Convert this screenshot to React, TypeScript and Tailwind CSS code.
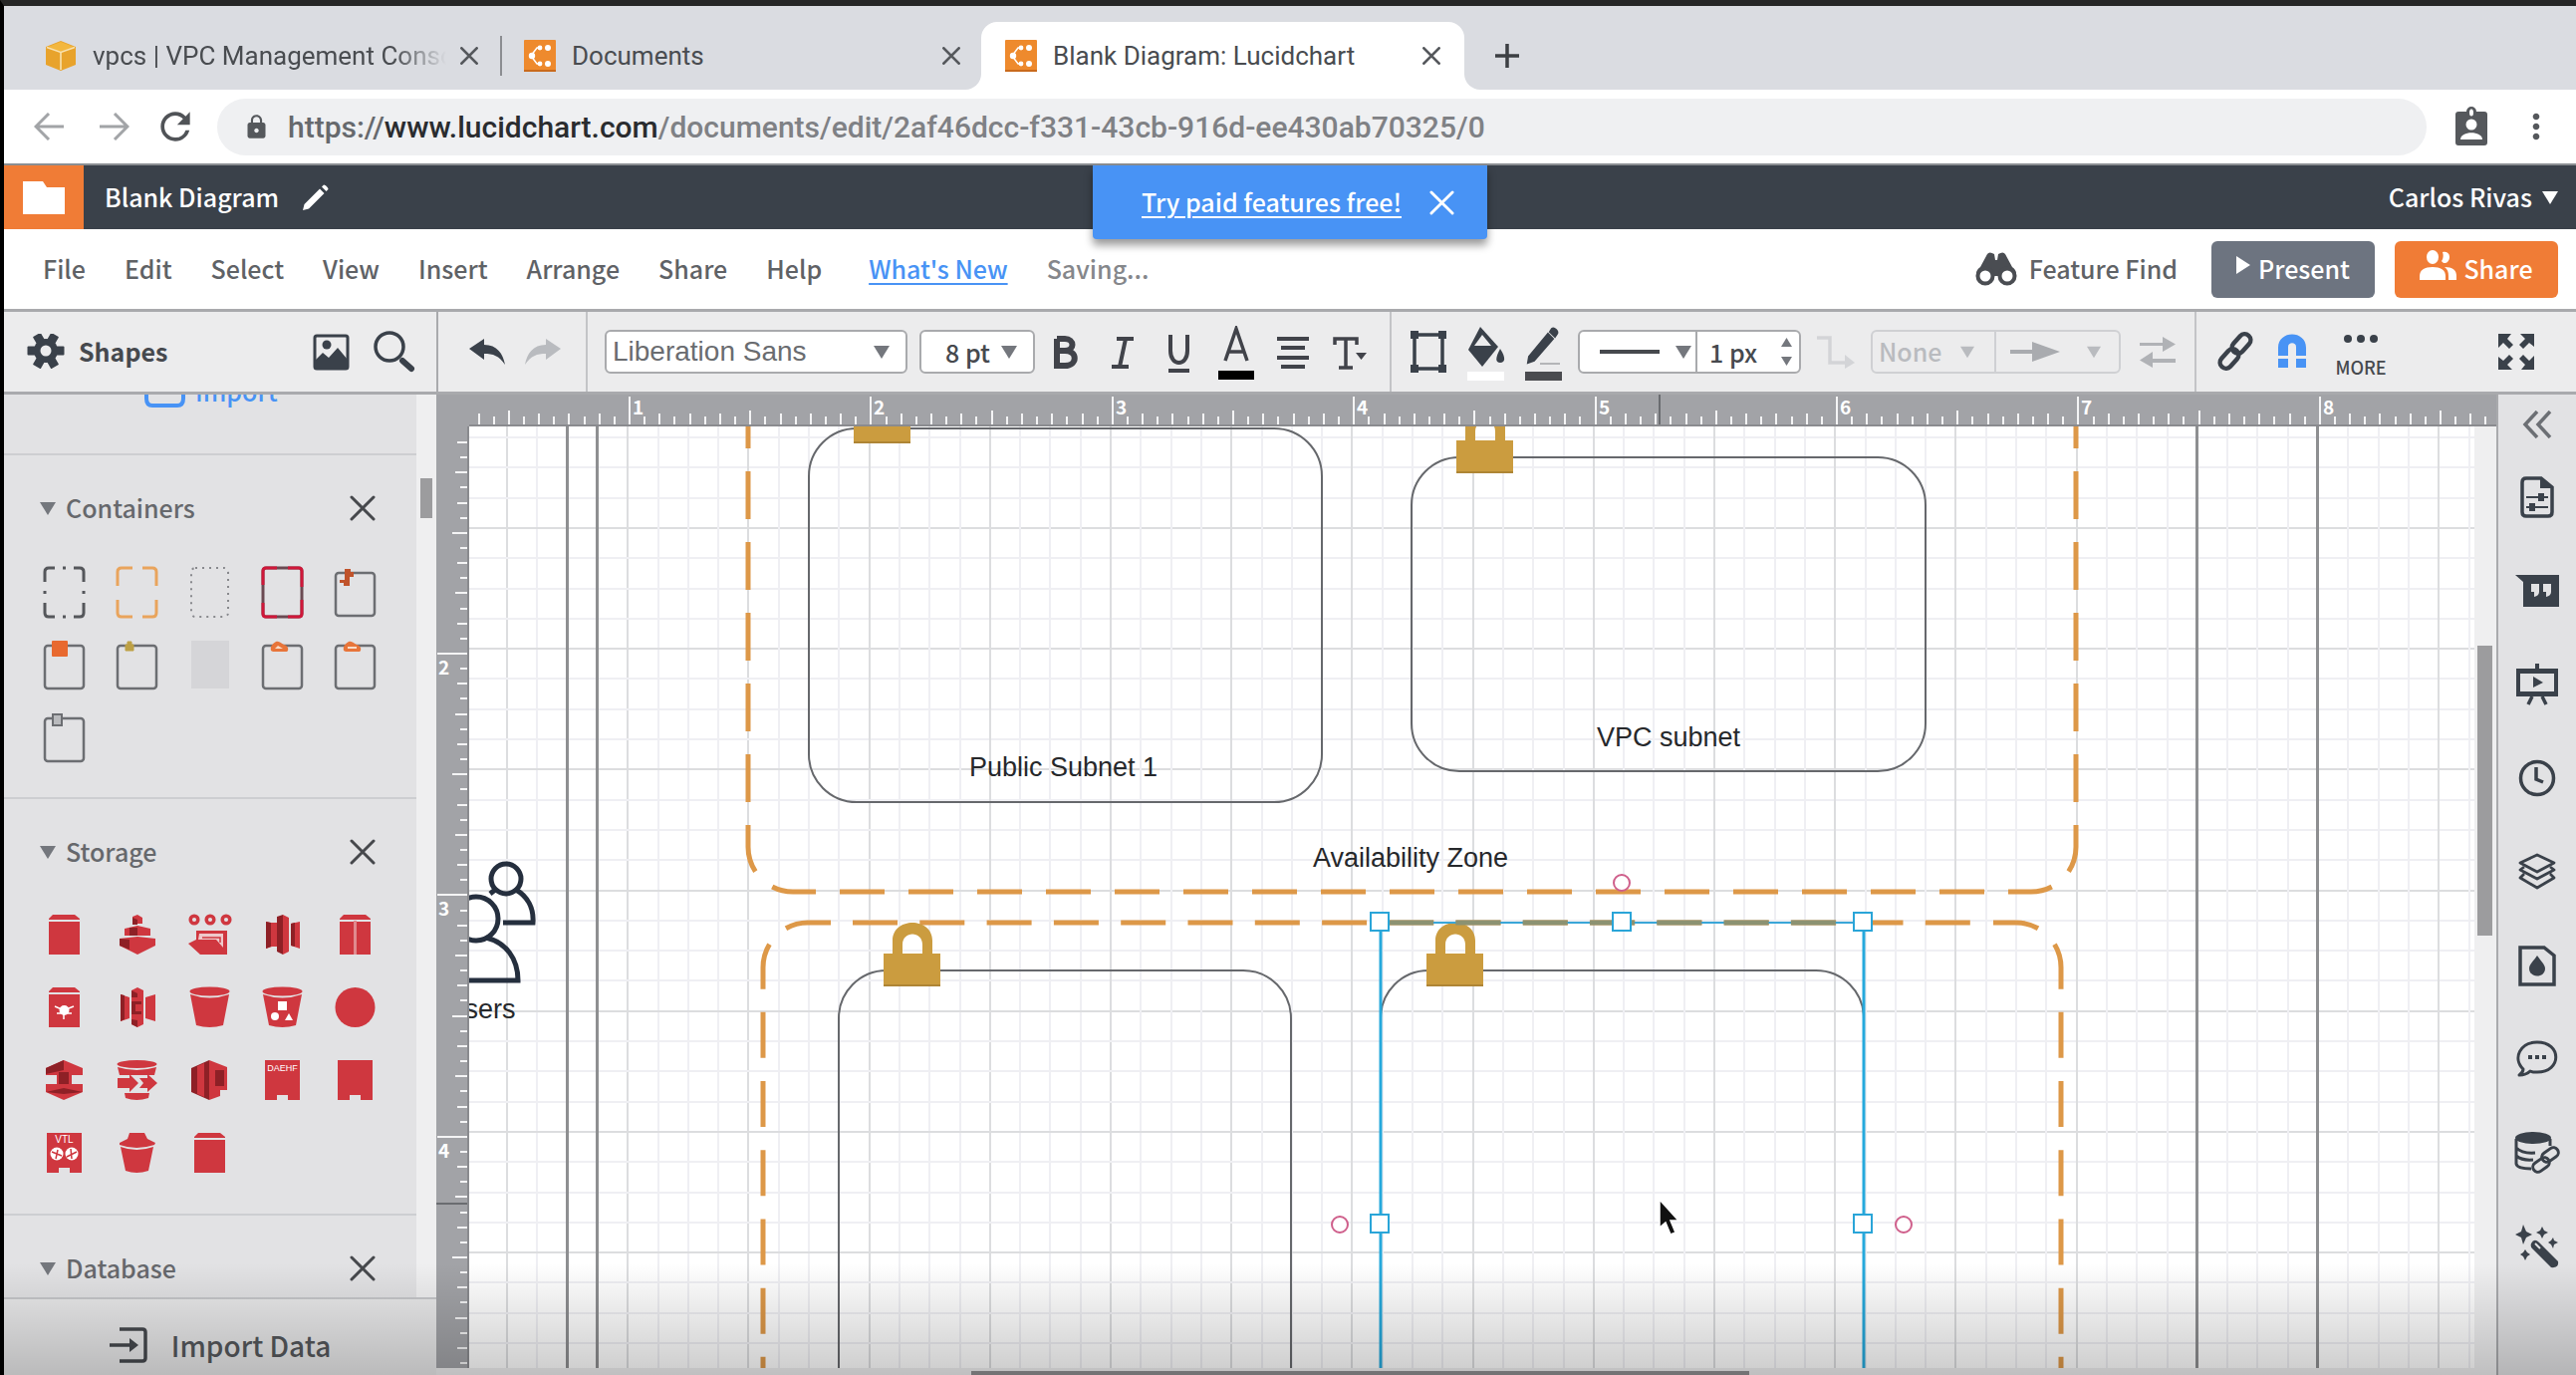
import React from "react";
import { MdRefresh, MdLock, MdMoreVert } from "react-icons/md";

const UI = "font-['Noto_Sans_CJK_SC',sans-serif]";
const ROBOTO = "font-[Roboto,sans-serif]";
const ARIAL = "font-['Liberation_Sans',sans-serif]";
const INK = "#3a414a";

/* ---------- small shared glyphs ---------- */

function Cross({ size = 26, color = "#46484c", w = 3 }: { size?: number; color?: string; w?: number }) {
  return (
    <svg width={size} height={size} viewBox="0 0 26 26" fill="none" stroke={color} strokeWidth={w} strokeLinecap="round">
      <path d="M2 2 24 24M24 2 2 24" />
    </svg>
  );
}

function Down({ w = 16, h = 13, color = "#74777d" }: { w?: number; h?: number; color?: string }) {
  return (
    <svg width={w} height={h} viewBox="0 0 16 13" fill={color} className="shrink-0">
      <path d="M0 0H16L8 13Z" />
    </svg>
  );
}

/* ---------- browser chrome ---------- */

function LucidLogo() {
  return (
    <svg width="32" height="32" viewBox="0 0 32 32" className="shrink-0">
      <rect width="32" height="32" rx="1" fill="#ee8a2d" />
      <rect y="30" width="32" height="2" fill="#c96a1c" />
      <g fill="#fff">
        <path d="M7 16 13 8H18M7 16 13 24H18" fill="none" stroke="#fff" strokeWidth="1.500" />
        <circle cx="8" cy="16" r="3.200" />
        <circle cx="16" cy="8" r="2.400" />
        <circle cx="16" cy="24" r="2.400" />
        <circle cx="24" cy="8" r="3" />
        <circle cx="24" cy="24" r="3" />
      </g>
    </svg>
  );
}

function CubeLogo() {
  return (
    <svg width="32" height="32" viewBox="0 0 32 32" className="shrink-0">
      <path d="M1 7 16 1 31 7V25L16 31 1 25Z" fill="#e8a32c" />
      <path d="M3 7 16 2 29 7 16 12Z" fill="#f3b73e" />
      <path d="M16 12V30M2 7.500 16 12.500 30 7.500" stroke="#f8e2b0" strokeWidth="1.600" fill="none" />
    </svg>
  );
}

function Tabs() {
  return (
    <div className={`flex h-[84px] items-end bg-[#dadce1] ${ROBOTO} text-[26px] text-[#494c50]`}>
      <div className="flex h-[68px] w-[500px] items-center pl-[41px]">
        <CubeLogo />
        <span className="ml-4 w-[355px] overflow-hidden whitespace-nowrap [mask-image:linear-gradient(to_right,black_85%,transparent)]">
          vpcs | VPC Management Console
        </span>
        <button aria-label="Close tab" className="ml-3.5">
          <Cross size={18} w={4} color="#55585c" />
        </button>
        <span className="ml-auto h-10 w-0.5 bg-[#8b8d91]" />
      </div>
      <div className="flex h-[68px] w-[481px] items-center pr-[21px] pl-[22px]">
        <LucidLogo />
        <span className="ml-4">Documents</span>
        <button aria-label="Close tab" className="ml-auto">
          <Cross size={18} w={4} color="#55585c" />
        </button>
      </div>
      <div className="relative flex h-[68px] w-[485px] items-center rounded-t-2xl bg-white pr-6 pl-6 before:absolute before:bottom-0 before:-left-4 before:size-4 before:rounded-br-2xl before:shadow-[5px_5px_0_4px_white] before:[clip-path:inset(0)] after:absolute after:-right-4 after:bottom-0 after:size-4 after:rounded-bl-2xl after:shadow-[-5px_5px_0_4px_white] after:[clip-path:inset(0)]">
        <LucidLogo />
        <span className="ml-4">Blank Diagram: Lucidchart</span>
        <button aria-label="Close tab" className="ml-auto">
          <Cross size={18} w={4} color="#55585c" />
        </button>
      </div>
      <button aria-label="New tab" className="ml-[30px] flex h-[68px] items-center">
        <svg width="26" height="26" viewBox="0 0 26 26" stroke="#3c3f43" strokeWidth="3.500">
          <path d="M13 1V25M1 13H25" />
        </svg>
      </button>
    </div>
  );
}

function AddressBar() {
  return (
    <div className="flex h-[74px] items-center bg-white pr-5 pl-[30px]">
      <button aria-label="Back" className="mr-9">
        <svg width="30" height="28" viewBox="0 0 30 28" fill="none" stroke="#a2a4a7" strokeWidth="3">
          <path d="M30 14H3M15 1 2 14 15 27" />
        </svg>
      </button>
      <button aria-label="Forward" className="mr-6">
        <svg width="30" height="28" viewBox="0 0 30 28" fill="none" stroke="#a2a4a7" strokeWidth="3">
          <path d="M0 14H27M15 1 28 14 15 27" />
        </svg>
      </button>
      <button aria-label="Reload" className="mr-5">
        <MdRefresh size={44} color="#505357" />
      </button>
      <div className="flex h-[57px] flex-1 items-center rounded-full bg-[#eff0f2] pl-[26px]">
        <MdLock size={27} color="#55585c" />
        <span className={`ml-[18px] ${ROBOTO} text-[30px] font-medium whitespace-nowrap text-[#7f8185]`}>
          <span className="text-[#66696d]">https://</span>
          <span className="text-[#2a2c2f]">www.lucidchart.com</span>/documents/edit/2af46dcc-f331-43cb-916d-ee430ab70325/0
        </span>
      </div>
      <button aria-label="Account badge" className="ml-7">
        <svg width="34" height="40" viewBox="0 0 34 40">
          <path d="M4 5H12A5 5 0 0 1 22 5H30A3 3 0 0 1 33 8V36A3 3 0 0 1 30 39H4A3 3 0 0 1 1 36V8A3 3 0 0 1 4 5Z" fill="#55585c" />
          <ellipse cx="17" cy="6" rx="2" ry="3.500" fill="#fff" />
          <circle cx="17" cy="18" r="5.500" fill="#fff" />
          <path d="M6 33C6 24 28 24 28 33Z" fill="#fff" />
        </svg>
      </button>
      <button aria-label="Browser menu" className="ml-7">
        <MdMoreVert size={40} color="#55585c" />
      </button>
    </div>
  );
}

/* ---------- application header ---------- */

function TitleBar() {
  return (
    <div className={`relative flex h-[66px] items-center border-t-2 border-[#8b8e92] bg-[#3a414a] ${UI} text-[25px] font-medium text-white`}>
      <button aria-label="Documents" className="flex h-full w-20 items-center justify-center bg-[#f07c36]">
        <svg width="42" height="34" viewBox="0 0 42 34" fill="#fff">
          <path d="M0 1H20L24 7H42V34H0Z" />
        </svg>
      </button>
      <h1 className="ml-[21px]">Blank Diagram</h1>
      <button aria-label="Rename" className="ml-6">
        <svg width="26" height="26" viewBox="0 0 26 26" fill="#fff">
          <path d="M0 26 1.500 20 17 4.500 21.500 9 6 24.500ZM19 2.500 21 .5C22 0 26 3.500 25.500 5L23.500 7Z" />
        </svg>
      </button>
      <button className="mr-[18px] ml-auto flex items-center gap-2.5">
        Carlos Rivas
        <Down color="#fff" />
      </button>
      <div className="absolute top-0 left-1/2 z-10 flex h-[74px] w-[396px] -translate-x-1/2 items-center justify-center gap-7 rounded-b bg-[#4893f5] pl-4 shadow-[0_6px_8px_rgba(0,0,0,0.4)]">
        <a href="#upgrade" className="font-medium whitespace-nowrap underline decoration-2 underline-offset-4">
          Try paid features free!
        </a>
        <button aria-label="Dismiss">
          <Cross size={25} color="#fff" />
        </button>
      </div>
    </div>
  );
}

function MenuBar() {
  return (
    <div className={`flex h-[83px] items-center border-b-[3px] border-[#a9aaad] bg-white pr-[18px] pl-[39px] ${UI} text-[25px] font-medium text-[#5f6266]`}>
      <nav className="flex items-center gap-[39px]">
        {["File", "Edit", "Select", "View", "Insert", "Arrange", "Share", "Help"].map((m) => (
          <button key={m}>{m}</button>
        ))}
        <a href="#new" className="ml-2 text-[#4893f5] underline decoration-2 underline-offset-4">
          What's New
        </a>
        <span className="text-[#85878b]">Saving...</span>
      </nav>
      <button className="mr-[34px] ml-auto flex items-center gap-3 whitespace-nowrap">
        <svg width="42" height="34" viewBox="0 0 42 34" fill="#4a4d52">
          <path d="M12 2Q14-1 19 2L20 8H22L23 2Q28-1 30 2L37 15Q42 18 41 25L33 20H24V24H18V20H9L1 25Q0 18 5 15Z" />
          <circle cx="10" cy="24" r="7.500" fill="#fff" stroke="#4a4d52" strokeWidth="4" />
          <circle cx="32" cy="24" r="7.500" fill="#fff" stroke="#4a4d52" strokeWidth="4" />
        </svg>
        Feature Find
      </button>
      <button className="flex h-[57px] w-[164px] items-center justify-center gap-2 rounded-md bg-[#6d7480] text-white">
        <svg width="14" height="18" viewBox="0 0 14 18" fill="#fff" className="-mt-2">
          <path d="M0 0 14 9 0 18Z" />
        </svg>
        Present
      </button>
      <button className="ml-5 flex h-[57px] w-[164px] items-center justify-center gap-1.5 rounded-md bg-[#f07c36] text-white">
        <svg width="38" height="30" viewBox="0 0 38 30" fill="#fff" className="-mt-2">
          <ellipse cx="13" cy="7" rx="6" ry="7" />
          <path d="M23 2C30 0 32 8 28 12 26 14 23 13 22 11 24 8 24 5 23 2Z" />
          <path d="M0 30V26C0 20 5 17 13 17S26 20 26 26V30Z" />
          <path d="M25 17C33 17 37 20 37 26V30H29V26C29 22 28 19 25 17Z" />
        </svg>
        Share
      </button>
    </div>
  );
}

/* ---------- toolbar ---------- */

function IconButton({ label, children, className = "w-[57px]" }: { label: string; children: React.ReactNode; className?: string }) {
  return (
    <button aria-label={label} className={`flex h-full shrink-0 items-center justify-center ${className}`}>
      {children}
    </button>
  );
}

const Sep = () => <div className="h-full w-0.5 shrink-0 bg-[#c3c4c7]" />;

function Toolbar() {
  return (
    <div className={`flex h-[83px] items-center border-b-[3px] border-[#a9aaad] bg-[#ececed] ${UI} text-[25px] text-[#46494e]`}>
      <div className="flex h-full w-[436px] shrink-0 items-center border-r-2 border-[#a9aaad] pr-[21px] pl-[23px]">
        <button aria-label="Shape settings">
          <svg width="38" height="36" viewBox="0 0 38 36" fill={INK}>
            <g transform="translate(19 17)">
              <circle r="12" />
              {[0, 60, 120].map((a) => (
                <rect key={a} x="-18.500" y="-4.500" width="37" height="9" rx="1" transform={`rotate(${a})`} />
              ))}
              <circle r="5.500" fill="#ececed" />
            </g>
          </svg>
        </button>
        <h2 className="ml-3.5 font-bold">Shapes</h2>
        <button aria-label="Images" className="mr-6 ml-auto">
          <svg width="37" height="37" viewBox="0 0 37 37">
            <rect x="2" y="2" width="33" height="33" rx="2" fill="none" stroke={INK} strokeWidth="3" />
            <circle cx="14" cy="11" r="4.500" fill={INK} />
            <path d="M2 27 10 19 16 24 25 14 35 26V35H2Z" fill={INK} />
          </svg>
        </button>
        <button aria-label="Search shapes">
          <svg width="42" height="42" viewBox="0 0 42 42" fill="none" stroke={INK}>
            <circle cx="16" cy="16" r="14" strokeWidth="3.500" />
            <path d="M29 30 38 38" strokeWidth="6" strokeLinecap="round" />
          </svg>
        </button>
      </div>
      <div className="flex h-full w-[148px] shrink-0 items-center justify-center gap-5 pl-1.5">
        <button aria-label="Undo">
          <svg width="36" height="26" viewBox="0 0 36 26" fill={INK}>
            <path d="M0 10 15 0V6C28 6 34 15 36 26 30 17 24 15 15 15V21Z" />
          </svg>
        </button>
        <button aria-label="Redo">
          <svg width="36" height="26" viewBox="0 0 36 26" fill="#b9bbbf">
            <path d="M36 10 21 0V6C8 6 2 15 0 26 6 17 12 15 21 15V21Z" />
          </svg>
        </button>
      </div>
      <Sep />
      <label className="relative ml-[17px] shrink-0">
        <select aria-label="Font" className={`block h-[44px] w-[304px] appearance-none rounded-md border-2 border-[#a9aaad] bg-white pl-1.5 ${ARIAL} text-[28px] leading-10 text-[#6a6c70]`}>
          <option>Liberation Sans</option>
        </select>
        <span className="pointer-events-none absolute top-4 right-[18px]">
          <Down />
        </span>
      </label>
      <label className="relative ml-3 shrink-0">
        <select aria-label="Font size" className="block h-[44px] w-[116px] appearance-none rounded-md border-2 border-[#a9aaad] bg-white pl-6 leading-10 font-medium">
          <option>8 pt</option>
        </select>
        <span className="pointer-events-none absolute top-4 right-[18px]">
          <Down />
        </span>
      </label>
      <div className="ml-0.5 flex h-full pt-0.5">
        <IconButton label="Bold">
          <svg width="26" height="36" viewBox="0 0 26 36" fill="none" stroke="#41434a" strokeWidth="6">
            <path d="M4 4H12C22 4 22 16 12 16H4M12 16C25 16 25 31 12 31H4V4" />
          </svg>
        </IconButton>
        <IconButton label="Italic">
          <svg width="22" height="36" viewBox="0 0 22 36" fill="none" stroke="#41434a" strokeWidth="4">
            <path d="M5 4H22M0 32H17M14 4 8 32" />
          </svg>
        </IconButton>
        <IconButton label="Underline">
          <svg width="24" height="40" viewBox="0 0 24 40" fill="none" stroke="#41434a" strokeWidth="4">
            <path d="M3 2V18C3 34 20 34 20 18V2M1 38H22" />
          </svg>
        </IconButton>
        <IconButton label="Text colour">
          <svg width="38" height="54" viewBox="0 0 38 54" fill="none">
            <path d="M8 35 19 3 30 35M12 26H27" stroke="#41434a" strokeWidth="3.500" />
            <rect x="1" y="45" width="36" height="9" fill="#000" />
          </svg>
        </IconButton>
        <IconButton label="Alignment">
          <svg width="34" height="36" viewBox="0 0 34 36" stroke="#41434a" strokeWidth="4">
            <path d="M1 4H33M5 13H29M1 23H33M5 32H29" />
          </svg>
        </IconButton>
        <IconButton label="Text options">
          <svg width="34" height="36" viewBox="0 0 34 36" fill="none" stroke="#41434a" strokeWidth="3.500">
            <path d="M2 10V4H24V10M13 4V33M6 33H20" />
            <path d="M23 18H34L28.500 25Z" fill="#41434a" stroke="none" />
          </svg>
        </IconButton>
      </div>
      <div className="ml-3 h-full w-0.5 shrink-0 bg-[#c3c4c7]" />
      <div className="ml-2 flex h-full">
        <IconButton label="Shape">
          <svg width="38" height="44" viewBox="0 0 38 44" fill={INK}>
            <rect x="5" y="5" width="28" height="34" fill="none" stroke={INK} strokeWidth="3.500" />
            <path d="M1 1H9V9H1ZM29 1H37V9H29ZM1 35H9V43H1ZM29 35H37V43H29Z" />
          </svg>
        </IconButton>
        <IconButton label="Fill colour" className="w-[59px] pt-1">
          <svg width="40" height="56" viewBox="0 0 40 56">
            <path d="M14 1 32 21 16 41 2 24Z" fill={INK} />
            <path d="M16 9 25 20H8Z" fill="#ececed" />
            <path d="M34 23C40 32 39 37 34 37 29 37 29 32 34 23Z" fill={INK} />
            <rect x="1" y="46" width="37" height="9" fill="#fff" />
          </svg>
        </IconButton>
        <IconButton label="Line colour" className="w-[57px] pt-1">
          <svg width="40" height="56" viewBox="0 0 40 56" fill={INK}>
            <path d="M4 37 5 31 24 8 29 13 10 35ZM26 6 28 3C30 1 35 6 33 8L31 11Z" stroke={INK} strokeWidth="2" />
            <path d="M16 38H36" stroke="#b4b5b8" strokeWidth="2" />
            <rect x="1" y="46" width="37" height="9" fill="#4a4b4f" />
          </svg>
        </IconButton>
      </div>
      <div className="ml-1.5 flex h-[44px] shrink-0 items-center rounded-md border-2 border-[#a9aaad] bg-white">
        <button aria-label="Line style" className="flex h-full w-[118px] items-center justify-between border-r-2 border-[#a9aaad] pr-1 pl-5">
          <svg width="60" height="4" viewBox="0 0 60 4">
            <rect width="60" height="4" fill="#46494e" />
          </svg>
          <Down />
        </button>
        <input aria-label="Line width" defaultValue="1 px" className="h-full w-[76px] bg-transparent pl-3 leading-10 font-medium outline-none" />
        <span className="flex w-[26px] flex-col items-center gap-2">
          <button aria-label="Increase line width" className="rotate-180">
            <Down w={11} h={11} />
          </button>
          <button aria-label="Decrease line width">
            <Down w={11} h={11} />
          </button>
        </span>
      </div>
      <IconButton label="Line shape" className="w-[70px]">
        <svg width="38" height="34" viewBox="0 0 38 34" fill="none" stroke="#d3d4d7" strokeWidth="3.500">
          <path d="M0 3H13V28H30" />
          <path d="M28 20 38 28 28 34Z" fill="#d3d4d7" stroke="none" />
        </svg>
      </IconButton>
      <div className="flex h-[44px] shrink-0 items-center rounded-md border-2 border-[#cfd0d3] text-[#b9bbbf]">
        <button className="flex h-full w-[124px] items-center justify-between border-r-2 border-[#cfd0d3] pr-5 pl-1.5 font-medium">
          None
          <Down w={14} color="#b9bbbf" />
        </button>
        <button aria-label="Arrow end" className="flex h-full w-[123px] items-center justify-between pr-4.5 pl-3.5">
          <svg width="50" height="20" viewBox="0 0 50 20" fill="#a9abaf">
            <path d="M0 8H22V0L50 10 22 20V12H0Z" />
          </svg>
          <Down w={14} color="#b9bbbf" />
        </button>
      </div>
      <IconButton label="Swap ends" className="w-[74px]">
        <svg width="36" height="34" viewBox="0 0 36 34" fill="#b0b2b6">
          <path d="M0 8H23V2L36 9.500 23 17V11H0ZM36 24H13V17L0 25.500 13 33V28H36Z" />
        </svg>
      </IconButton>
      <Sep />
      <IconButton label="Link" className="ml-2.5 w-[57px]">
        <svg width="40" height="42" viewBox="0 0 40 42" fill="none" stroke={INK} strokeWidth="4.500">
          <rect x="-6" y="-11" width="12" height="22" rx="6" transform="translate(26 13) rotate(42)" />
          <rect x="-6" y="-11" width="12" height="22" rx="6" transform="translate(14 28) rotate(42)" />
        </svg>
      </IconButton>
      <IconButton label="Snap">
        <svg width="30" height="36" viewBox="0 0 30 36" fill="#4893f5">
          <path d="M1 22V14C1-4 29-4 29 14V22H19V13C19 8 11 8 11 13V22ZM1 25H11V34H1ZM19 25H29V34H19Z" />
        </svg>
      </IconButton>
      <button className="ml-2 flex w-[66px] flex-col items-center gap-2.5 text-[18px] leading-7 font-medium">
        <svg width="34" height="8" viewBox="0 0 34 8" fill={INK} className="mt-3">
          <circle cx="4" cy="4" r="4" />
          <circle cx="17" cy="4" r="4" />
          <circle cx="30" cy="4" r="4" />
        </svg>
        MORE
      </button>
      <IconButton label="Full screen" className="mr-[31px] ml-auto w-[58px]">
        <svg width="38" height="38" viewBox="0 0 38 38" fill={INK}>
          {[0, 90, 180, 270].map((a) => (
            <path key={a} d="M1 1H14L10 6 16 12 12 16 6 10 1 15Z" transform={`rotate(${a} 19 19)`} />
          ))}
        </svg>
      </IconButton>
    </div>
  );
}

/* ---------- shape library ---------- */

const RED = "#cf373f";
const DARK = "#8e2026";

const frame = <rect x="10" y="10" width="39" height="43" rx="3" fill="none" stroke="#6c6e72" strokeWidth="2.500" />;

const containers: React.ReactNode[] = [
  <path d="M10 19V9Q10 5 14 5H20M28 5H31M39 5H45Q49 5 49 9V19M49 28V31M49 40V50Q49 54 45 54H39M31 54H28M20 54H14Q10 54 10 50V40M10 31V28" fill="none" stroke="#55575b" strokeWidth="3" />,
  <path d="M10 23V9Q10 5 14 5H25M35 5H45Q49 5 49 9V23M49 37V50Q49 54 45 54H35M25 54H14Q10 54 10 50V37" fill="none" stroke="#e9a45c" strokeWidth="3" />,
  <rect x="11" y="5" width="37" height="49" rx="4" fill="none" stroke="#88898d" strokeWidth="2" strokeDasharray="2 5" />,
  <>
    <rect x="10" y="5" width="39" height="49" rx="3" fill="none" stroke="#6b4a52" strokeWidth="3" />
    <path d="M10 22V8Q10 5 13 5H24M35 5H46Q49 5 49 8V24M49 37V51Q49 54 46 54H35M24 54H13Q10 54 10 51V40" fill="none" stroke="#cf1739" strokeWidth="3" />
  </>,
  <>
    {frame}
    <path d="M19 6H25V9H28V14H24V23H18V20H14V17H19Z" fill="#c0532b" />
  </>,
  <>
    {frame}
    <rect x="17" y="5" width="16" height="16" rx="1" fill="#e8692f" />
  </>,
  <>
    {frame}
    <path d="M18 9H26V15H18ZM20 9V6H24V9" fill="#bda045" stroke="#bda045" />
  </>,
  <rect x="11" y="5" width="38" height="48" fill="#d5d5d8" />,
  <>
    {frame}
    <path d="M18 15C17 10 20 8 23 6 27 5 28 8 31 9 36 10 36 15 34 16H20Z" fill="#e8753a" />
    <path d="M22 13 25 10 30 13Z" fill="#f9dcc8" />
  </>,
  <>
    {frame}
    <path d="M18 15C17 10 20 8 23 6 27 5 28 8 31 9 36 10 36 15 34 16H20Z" fill="#e8753a" />
    <path d="M22 11H31V13H22Z" fill="#f9dcc8" />
  </>,
  <>
    {frame}
    <rect x="18" y="6" width="9" height="11" fill="#b9babd" stroke="#6c6e72" strokeWidth="2" />
  </>,
];

const box = (
  <>
    <path d="M14 13V12L18 8H40L45 12V13Z" fill={RED} />
    <rect x="14" y="15" width="31" height="33" fill={RED} />
  </>
);
const bucket = (
  <>
    <ellipse cx="29.500" cy="12" rx="20" ry="4.500" fill={RED} />
    <path d="M10 15Q29.500 22 49 15L43 46Q29.500 50 16 46Z" fill={RED} />
  </>
);
const server = <path d="M12 8H47V48H35V43H24V48H12Z" fill={RED} />;

const storage: React.ReactNode[] = [
  box,
  <>
    <path d="M25 10 30 8 35 11V17H25ZM17 22 30 19 43 22V29H17ZM12 32 30 30 48 32V39L30 48 12 39Z" fill={RED} />
    <path d="M25 11 30 13V18H25ZM22 21H30V29H22ZM12 32 22 33V43L12 39Z" fill={DARK} />
  </>,
  <>
    <g fill="none" stroke={RED} strokeWidth="3.500">
      <circle cx="14" cy="13" r="3.800" />
      <circle cx="30" cy="13" r="3.800" />
      <circle cx="46" cy="13" r="3.800" />
    </g>
    <path d="M16 24H47V48H20L8 37 16 33Z" fill={RED} />
    <path d="M18 33 19 27H43V41L36 33Z" fill="#efc9cb" />
    <path d="M22 31H40V36" fill="none" stroke={RED} strokeWidth="1.500" />
  </>,
  <>
    <path d="M13 15 22 17V39L13 42ZM38 17 47 15V42L38 39Z" fill={RED} />
    <path d="M13 15 18 16V40L13 42ZM24 10 30 8V48L24 45ZM38 17 42 16V40L38 39Z" fill={DARK} />
    <path d="M30 8 36 11V45L30 48ZM18 16H24V40H18Z" fill={RED} />
  </>,
  <>
    {box}
    <path d="M29.500 14V48" stroke="#e08a8e" strokeWidth="3" />
  </>,
  <>
    {box}
    <circle cx="29.500" cy="31" r="5" fill="#fff" />
    <path d="M20 27 29 31 39 27M29 31V40M22 34 37 34" fill="none" stroke="#fff" strokeWidth="1.500" />
  </>,
  <>
    <path d="M24 11 30 8 36 11V45L30 48 24 45Z" fill={RED} />
    <path d="M13 15 22 18V39L13 42ZM38 18 48 15V42L38 39Z" fill={RED} />
    <path d="M13 15 17 16V40L13 42ZM24 11 30 14V18H24ZM24 22H34V35H24ZM24 40 30 41V48L24 45Z" fill={DARK} />
    <rect x="28" y="25" width="8" height="7" fill={RED} />
  </>,
  bucket,
  <>
    {bucket}
    <path d="M25 22H34V31H25ZM36 34 40 41H32Z" fill="#fff" />
    <circle cx="22" cy="37" r="4" fill="#fff" />
  </>,
  <circle cx="29.500" cy="28" r="20" fill={RED} />,
  <>
    <path d="M11 16 29 8 48 16V23H11ZM11 32H48V40L29 48 11 40Z" fill={RED} />
    <path d="M22 20H37V36H22Z" fill={RED} />
    <path d="M11 16 29 8V18L11 22ZM24 20H34V32H24ZM11 40 29 36 48 40 29 42Z" fill={DARK} />
  </>,
  <>
    <ellipse cx="29.500" cy="12" rx="20" ry="4" fill={RED} />
    <path d="M10 15Q29 21 49 15L47 23H12ZM10 26H22V22L31 31 22 40V36H10ZM32 26H40V22L50 31 40 40V36H32L36 31ZM17 41H42L41 46Q29 50 18 46Z" fill={RED} />
  </>,
  <>
    <path d="M11 16 29 8V48L11 40Z" fill={DARK} />
    <path d="M17 14 24 11V45L17 42ZM29 8 47 15V38H40V44L29 48Z" fill={RED} />
    <path d="M35 18H44V34H35Z" fill={DARK} />
  </>,
  <>
    {server}
    <text x="29.500" y="19" textAnchor="middle" fontSize="9" fill="#fff" fontFamily="Liberation Sans">DAEHF</text>
  </>,
  server,
  <>
    {server}
    <text x="29.500" y="18" textAnchor="middle" fontSize="10" fill="#fff" fontFamily="Liberation Sans">VTL</text>
    <circle cx="22" cy="29" r="6.500" fill="#fff" />
    <circle cx="37" cy="29" r="6.500" fill="#fff" />
    <path d="M17 27 27 31M21 34 23 25M32 32 42 27M37 34 36 24" stroke={RED} strokeWidth="1.500" />
  </>,
  <>
    <path d="M22 8H37L40 14 48 18 47 20Q29 26 12 20L12 18 20 14Z" fill={RED} />
    <path d="M13 22Q29 28 46 22L41 46Q29 50 18 46Z" fill={RED} />
  </>,
  box,
];

function Section({ title, items }: { title: string; items: React.ReactNode[] }) {
  return (
    <section className="border-b-2 border-[#cdced1] pb-6">
      <div className="flex h-[100px] items-center pt-1.5 pr-[41px] pl-9">
        <button className="flex items-center gap-2.5">
          <Down />
          {title}
        </button>
        <button aria-label={`Remove ${title}`} className="ml-auto">
          <Cross />
        </button>
      </div>
      <div className="grid grid-cols-[repeat(5,73px)] pl-6">
        {items.map((node, i) => (
          <button key={i} aria-label={`${title} shape ${i + 1}`} className="flex h-[73px] items-center justify-center">
            <svg width="59" height="58" viewBox="0 0 59 58">
              {node}
            </svg>
          </button>
        ))}
      </div>
    </section>
  );
}

function Sidebar() {
  return (
    <aside className={`flex w-[434px] shrink-0 flex-col bg-[#e2e2e4] ${UI} text-[25px] font-medium text-[#66686c]`}>
      <div className="flex min-h-0 flex-1">
        <div className="flex-1 overflow-hidden">
          <div className="h-[61px] overflow-hidden border-b-2 border-[#cdced1]">
            <button className="-mt-6 ml-[141px] flex items-end gap-2.5 leading-10 text-[#4893f5]">
              <svg width="41" height="34" viewBox="0 0 41 34" fill="none" stroke="#4893f5" strokeWidth="4">
                <path d="M2 0V22Q2 29 8 29H33Q39 29 39 22V0" />
              </svg>
              Import
            </button>
          </div>
          <Section title="Containers" items={containers} />
          <Section title="Storage" items={storage} />
          <Section title="Database" items={[]} />
        </div>
        <div className="w-5 bg-[#efeff0] pt-[84px] pl-1">
          <div className="h-10 w-3 bg-[#9c9c9e]" />
        </div>
      </div>
      <button className="flex h-[78px] items-center justify-center gap-6 border-t-2 border-[#c6c7ca] bg-[#e9e9ea] pt-4 text-[28px] text-[#55585c]">
        <svg width="38" height="36" viewBox="0 0 38 36" fill="none" stroke="#46494e" strokeWidth="3.500">
          <path d="M10 2H33Q36 2 36 5V31Q36 34 33 34H10M0 18H24" />
          <path d="M20 11 29 18 20 25Z" fill="#46494e" stroke="none" />
        </svg>
        Import Data
      </button>
    </aside>
  );
}

/* ---------- rulers ---------- */

const INCH = 242.4;
const STEP = INCH / 16;

function TopRuler() {
  const first = 194;
  const ticks = Array.from({ length: 190 }, (_, i) => i - 10);
  return (
    <svg className="block h-8 w-full bg-[#a2a3a7]" aria-hidden="true">
      {ticks.map((i) => {
        const x = Math.round(first + i * STEP);
        const top = i % 16 === 0 ? 2 : i % 8 === 0 ? 16 : i % 2 === 0 ? 19 : 22;
        return <rect key={i} x={x - 1} y={top} width="2" height={30 - top} fill="#f4f4f5" />;
      })}
      {Array.from({ length: 8 }, (_, n) => (
        <text key={n} x={Math.round(first + n * INCH) + 3} y="20" fill="#fff" fontSize="19" fontWeight="700" fontFamily="Noto Sans CJK SC">
          {n + 1}
        </text>
      ))}
      <rect x="1227" y="0" width="2" height="32" fill="#6a6c70" />
      <rect x="33" y="30" width="100%" height="2" fill="#8a8b8f" />
    </svg>
  );
}

function SideRuler() {
  const first = 228;
  const ticks = Array.from({ length: 150 }, (_, i) => i - 14);
  return (
    <svg className="block h-full w-[33px] shrink-0 bg-[#a2a3a7]" aria-hidden="true">
      {ticks.map((i) => {
        const y = Math.round(first + i * STEP);
        const left = i % 16 === 0 ? 1 : i % 8 === 0 ? 16 : i % 4 === 0 ? 19 : i % 2 === 0 ? 21 : 24;
        return <rect key={i} x={left} y={y - 1} width={31 - left} height="2" fill="#f4f4f5" />;
      })}
      {Array.from({ length: 3 }, (_, n) => (
        <text key={n} x="2" y={Math.round(first + n * INCH) + 21} fill="#fff" fontSize="19" fontWeight="700" fontFamily="Noto Sans CJK SC">
          {n + 2}
        </text>
      ))}
      <rect x="0" y="779" width="33" height="2" fill="#6a6c70" />
      <rect x="31" y="0" width="2" height="100%" fill="#8a8b8f" />
    </svg>
  );
}

/* ---------- diagram ---------- */

function Padlock({ x, y }: { x: number; y: number }) {
  return (
    <g transform={`translate(${x} ${y})`} fill="#cb9c3f">
      <path d="M9 32V18C9-6 49-6 49 18V32H39V22C39 8 19 8 19 22V32Z" />
      <rect y="31" width="57" height="33" />
      <rect y="62" width="57" height="2" fill="#ae8535" />
    </g>
  );
}

function Handle({ x, y }: { x: number; y: number }) {
  return <rect x={x - 9} y={y - 9} width="18" height="18" fill="#fff" stroke="#2aa5d8" strokeWidth="2" />;
}

function Label({ className, children }: { className: string; children: React.ReactNode }) {
  return <span className={`absolute ${ARIAL} text-[27px] leading-8 whitespace-nowrap text-[#26282b] ${className}`}>{children}</span>;
}

const AZ = "#dd9848";

function Canvas() {
  const lines = Array.from({ length: 100 }, (_, i) => i);
  return (
    <div className="relative min-w-0 flex-1 overflow-hidden bg-white">
      <svg className="absolute inset-0 size-full" aria-hidden="true">
        <g transform="translate(-471 -428)">
          {lines.map((i) => (
            <g key={i}>
              <rect x={Math.round(509 + i * 30.3) - 1} y="427" width="2" height="3000" fill={i % 4 === 0 ? "#dcdddf" : "#efeff3"} />
              <rect x="471" y={Math.round(439 + i * 30.3) - 1} width="6000" height="2" fill={i % 4 === 3 ? "#dcdddf" : "#efeff3"} />
            </g>
          ))}
          {[568, 598, 2204, 2325].map((x) => (
            <rect key={x} x={x} y="427" width="3" height="3000" fill="#8e8f91" />
          ))}

          <g fill="none" stroke="#66686c" strokeWidth="2">
            <rect x="812" y="430" width="515" height="375" rx="48" />
            <rect x="1417" y="459" width="516" height="315" rx="48" />
            <rect x="842" y="974" width="454" height="900" rx="48" />
            <rect x="1386" y="974" width="485" height="900" rx="48" />
          </g>

          <g fill="none" stroke={AZ} strokeWidth="5">
            <path d="M751 402V850A45 45 0 0 0 796 895H819" strokeDasharray="48 23" />
            <path d="M2084 402V850A45 45 0 0 1 2039 895H2016" strokeDasharray="48 23" />
            <path d="M843 895H2015" strokeDasharray="45 24" />
            <path d="M834 926H811A45 45 0 0 0 766 971V2000" strokeDasharray="46 23.200" />
            <path d="M2001 926H2024A45 45 0 0 1 2069 971V2000" strokeDasharray="46 23.200" />
            <path d="M856 926H2000" strokeDasharray="45 22.300" />
          </g>

          <Padlock x={857} y={381} />
          <Padlock x={1462} y={411} />
          <Padlock x={887} y={926} />
          <Padlock x={1432} y={926} />

          <path d="M1386 926H1871" stroke="#3aa6d8" strokeWidth="2" />
          <path d="M1394 926H1871" stroke="#8c9272" strokeWidth="5" strokeDasharray="45 22.300" />
          <path d="M1386 926V2000M1871 926V2000" stroke="#26a9dc" strokeWidth="3" />
          {[1385, 1628, 1870].map((x) => (
            <Handle key={x} x={x} y={925} />
          ))}
          <Handle x={1385} y={1228} />
          <Handle x={1870} y={1228} />
          <g fill="#fff" stroke="#cf5f8b" strokeWidth="2">
            <circle cx="1628" cy="886" r="8" />
            <circle cx="1345" cy="1229" r="8" />
            <circle cx="1911" cy="1229" r="8" />
          </g>

          <g fill="none" stroke="#252f3e" strokeWidth="5">
            <circle cx="508" cy="882" r="15" />
            <path d="M492 897 497 893M518 893C530 900 536 912 535 926H505" />
            <circle cx="478" cy="922" r="22" />
            <path d="M488 941C508 946 520 962 520 984H440" />
          </g>

          <path d="M1666 1204V1232L1672 1227 1677 1239 1682 1237 1677 1225H1685Z" fill="#111" stroke="#fff" strokeWidth="1.500" />
        </g>
      </svg>
      <Label className="top-[326px] left-[502px]">Public Subnet 1</Label>
      <Label className="top-[296px] left-[1132px]">VPC subnet</Label>
      <Label className="top-[417px] left-[847px]">Availability Zone</Label>
      <Label className="top-[569px] -left-6">Users</Label>
    </div>
  );
}

function Workspace() {
  return (
    <main className="flex min-w-0 flex-1 flex-col">
      <TopRuler />
      <div className="flex min-h-0 flex-1">
        <SideRuler />
        <Canvas />
        <div className="w-[22px] shrink-0 bg-[#efeff0] pt-[220px] pl-[3px]">
          <div className="h-[291px] w-[15px] bg-[#9c9c9e]" />
        </div>
      </div>
      <div className="h-[7px] bg-[#efeff0] pt-[3px] pl-[537px]">
        <div className="h-1 w-[51%] bg-[#8f8f91]" />
      </div>
    </main>
  );
}

/* ---------- right dock ---------- */

const dock: { label: string; icon: React.ReactNode }[] = [
  {
    label: "Page settings",
    icon: (
      <>
        <path d="M12 4H27L38 13V38Q38 42 34 42H12Q8 42 8 38V8Q8 4 12 4" fill="none" stroke={INK} strokeWidth="3.500" />
        <path d="M26 4V14H38ZM12 22H34V24H12ZM12 32H34V34H12ZM24 19H30V27H24ZM15 29H21V37H15Z" fill={INK} />
      </>
    ),
  },
  {
    label: "Comments",
    icon: (
      <>
        <path d="M1 7H45V39H9V14Z" fill={INK} />
        <path d="M17 16H25V24Q25 28 20 29V24H17ZM29 16H37V24Q37 28 32 29V24H29Z" fill="#e2e2e4" />
      </>
    ),
  },
  {
    label: "Presentation",
    icon: (
      <>
        <path d="M21 2H25V7H44V35H2V7H21ZM6 12V30H40V12Z" fill={INK} fillRule="evenodd" />
        <path d="M19 15 29 21 19 26Z" fill={INK} />
        <path d="M18 35 14 43M28 35 32 43" stroke={INK} strokeWidth="3.500" />
      </>
    ),
  },
  {
    label: "History",
    icon: (
      <g fill="none" stroke={INK} strokeWidth="3.500">
        <circle cx="23" cy="23" r="16.500" />
        <path d="M22 12V24L29 27" />
      </g>
    ),
  },
  {
    label: "Layers",
    icon: (
      <g fill="none" stroke={INK} strokeWidth="2.800" strokeLinejoin="round">
        <path d="M23 6 40 14 23 23 6 14Z" />
        <path d="M10 18 6 21 23 30 40 21 36 18M10 25 6 29 23 39 40 29 36 25" />
      </g>
    ),
  },
  {
    label: "Theme",
    icon: (
      <>
        <path d="M6 5H30L40 13V42H6Z" fill="none" stroke={INK} strokeWidth="3.500" />
        <path d="M23 13C27 19 31 22 31 26 31 36 15 36 15 26 15 22 19 19 23 13Z" fill={INK} />
      </>
    ),
  },
  {
    label: "Chat",
    icon: (
      <>
        <path d="M9 33C-2 22 6 6 23 6 48 6 48 36 23 36 20 36 18 36 16 35 13 38 9 39 5 39 8 37 9 35 9 33Z" fill="none" stroke={INK} strokeWidth="3" strokeLinejoin="round" />
        <path d="M14 19H18V23H14ZM21 19H25V23H21ZM28 19H32V23H28Z" fill={INK} />
      </>
    ),
  },
  {
    label: "Data linking",
    icon: (
      <>
        <ellipse cx="19" cy="8" rx="18" ry="6" fill={INK} />
        <path d="M2 9V34Q3 39 17 39M2 18Q8 24 21 23M2 26Q8 31 19 30M36 9V16" fill="none" stroke={INK} strokeWidth="3" />
        <g fill="none" stroke={INK} strokeWidth="3">
          <rect x="-5" y="-9" width="10" height="18" rx="5" transform="translate(36 25) rotate(55)" />
          <rect x="-5" y="-9" width="10" height="18" rx="5" transform="translate(27 35) rotate(55)" />
        </g>
      </>
    ),
  },
  {
    label: "Magic",
    icon: (
      <g fill={INK}>
        <path d="M9 1 12 8 18 11 12 14 9 21 7 14 1 11 7 8ZM28 3 30 7 34 9 30 11 28 15 26 11 22 9 26 7ZM39 14 40 17 44 19 40 21 39 25 37 21 34 19 37 17ZM11 26 13 29 16 31 13 33 11 37 9 33 6 31 9 29Z" />
        <path d="M17 20Q20 14 25 19L44 38Q45 45 37 44L18 25Q16 23 17 20Z" />
        <path d="M21 20 26 25" stroke="#e2e2e4" strokeWidth="2" />
      </g>
    ),
  },
];

function Dock() {
  return (
    <aside className="flex w-20 shrink-0 flex-col border-l-2 border-[#a9aaad] bg-[#e2e2e4]">
      <button aria-label="Collapse panel" className="flex h-14 items-center justify-center pt-1">
        <svg width="30" height="28" viewBox="0 0 30 28" fill="none" stroke="#6c6f74" strokeWidth="3.500">
          <path d="M15 1 3 14 15 27M28 1 16 14 28 27" />
        </svg>
      </button>
      {dock.map((d) => (
        <button key={d.label} aria-label={d.label} className="flex h-[94px] items-center justify-center">
          <svg width="46" height="46" viewBox="0 0 46 46">
            {d.icon}
          </svg>
        </button>
      ))}
    </aside>
  );
}

export default function App() {
  return (
    <div className="relative flex h-screen w-full flex-col overflow-hidden border-t-[6px] border-l-4 border-t-[#262626] border-l-black bg-white">
      <Tabs />
      <AddressBar />
      <TitleBar />
      <MenuBar />
      <Toolbar />
      <div className="flex min-h-0 flex-1">
        <Sidebar />
        <Workspace />
        <Dock />
      </div>
      <div className="pointer-events-none absolute inset-x-0 bottom-0 h-28 bg-linear-to-t from-black/20 to-transparent" />
    </div>
  );
}
